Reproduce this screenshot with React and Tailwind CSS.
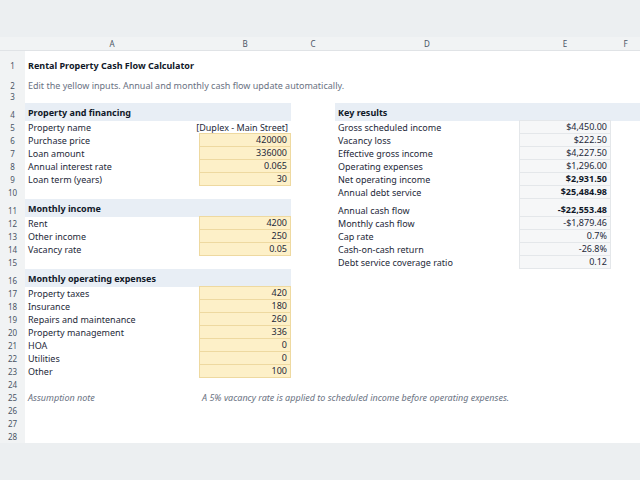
const cols = ['', 'A', 'B', 'C', 'D', 'E', 'F'];
const widths = ['w-[25px]', 'w-[174px]', 'w-[92px]', 'w-[44px]', 'w-[184px]', 'w-[92px]', 'w-[29px]'];

const heights = {
  1: 'h-[21px]', 2: 'h-[20px]', 3: 'h-[11px]', 4: 'h-[18px]', 11: 'h-[18px]', 16: 'h-[18px]',
};

const rows = {
  1: { a: 'Rental Property Cash Flow Calculator', aCls: 'font-bold text-gray-900' },
  2: { a: 'Edit the yellow inputs. Annual and monthly cash flow update automatically.', aCls: 'text-gray-500' },
  4: { a: 'Property and financing', head: 'left', d: 'Key results' },
  5: { a: 'Property name', b: '[Duplex - Main Street]', d: 'Gross scheduled income', e: '$4,450.00' },
  6: { a: 'Purchase price', b: '420000', input: true, d: 'Vacancy loss', e: '$222.50' },
  7: { a: 'Loan amount', b: '336000', input: true, d: 'Effective gross income', e: '$4,227.50' },
  8: { a: 'Annual interest rate', b: '0.065', input: true, d: 'Operating expenses', e: '$1,296.00' },
  9: { a: 'Loan term (years)', b: '30', input: true, d: 'Net operating income', e: '$2,931.50', eBold: true },
  10: { d: 'Annual debt service', e: '$25,484.98', eBold: true },
  11: { a: 'Monthly income', head: 'left', d: 'Annual cash flow', e: '-$22,553.48', eBold: true },
  12: { a: 'Rent', b: '4200', input: true, d: 'Monthly cash flow', e: '-$1,879.46' },
  13: { a: 'Other income', b: '250', input: true, d: 'Cap rate', e: '0.7%' },
  14: { a: 'Vacancy rate', b: '0.05', input: true, d: 'Cash-on-cash return', e: '-26.8%' },
  15: { d: 'Debt service coverage ratio', e: '0.12' },
  16: { a: 'Monthly operating expenses', head: 'left' },
  17: { a: 'Property taxes', b: '420', input: true },
  18: { a: 'Insurance', b: '180', input: true },
  19: { a: 'Repairs and maintenance', b: '260', input: true },
  20: { a: 'Property management', b: '336', input: true },
  21: { a: 'HOA', b: '0', input: true },
  22: { a: 'Utilities', b: '0', input: true },
  23: { a: 'Other', b: '100', input: true },
  25: { a: 'Assumption note', aCls: 'italic text-gray-500', b: 'A 5% vacancy rate is applied to scheduled income before operating expenses.', note: true },
};

function Row({ n }) {
  const r = rows[n] || {};
  const h = heights[n] || 'h-[13px]';
  const isHead = r.head === 'left';
  const headBg = 'bg-[#e8eef5] font-bold text-gray-900';
  return (
    <div className={`flex ${h} text-[9px] leading-none`}>
      <div className={`${widths[0]} shrink-0 bg-[#f1f3f4] text-gray-600 flex items-end pb-[2px] justify-center text-[8px]`}>{n}</div>
      <div className={`${widths[1]} shrink-0 flex px-[3px] whitespace-nowrap ${isHead ? headBg + ' items-center' : 'items-end pb-[2px]'} ${r.aCls || 'text-gray-800'}`}>
        {r.a}
      </div>
      {r.note ? (
        <div className="w-[276px] shrink-0 flex items-end pb-[2px] px-[3px] whitespace-nowrap italic text-gray-500">{r.b}</div>
      ) : (
        <div className={`${widths[2]} shrink-0 flex items-end justify-end pb-[2px] px-[3px] whitespace-nowrap text-gray-800 ${isHead ? headBg : ''} ${r.input ? 'bg-[#fdf0c8] border border-[#eed9a0] -mt-px' : ''}`}>
          {r.b}
        </div>
      )}
      {!r.note && <div className={`${widths[3]} shrink-0`} />}
      {!r.note && (
        <>
          <div className={`${widths[4]} shrink-0 flex px-[3px] whitespace-nowrap ${n === 4 ? headBg + ' items-center' : 'items-end pb-[2px] text-gray-800'}`}>{r.d}</div>
          <div className={`${widths[5]} shrink-0 flex items-end justify-end pb-[2px] px-[3px] whitespace-nowrap text-gray-800 ${n === 4 ? headBg : ''} ${r.e ? 'bg-[#f6f7f8] border border-[#e4e7ea] -mt-px' : ''} ${r.eBold ? 'font-bold text-gray-900' : ''}`}>{r.e}</div>
        </>
      )}
      <div className={`flex-1 ${n === 4 ? 'bg-[#e8eef5]' : ''}`} />
    </div>
  );
}

export default function App() {
  const nums = Array.from({ length: 28 }, (_, i) => i + 1);
  return (
    <div className="w-[640px] h-[480px] bg-[#eceff1] overflow-hidden font-['Liberation_Sans']">
      <div className="h-[37px]" />
      <div className="flex h-[14px] bg-[#f1f3f4] text-[8px] text-gray-600 border-b border-[#e0e3e6]">
        {cols.map((c, i) => (
          <div key={i} className={`${widths[i]} shrink-0 flex items-center justify-center`}>{c}</div>
        ))}
      </div>
      <div className="bg-white">
        {nums.map((n) => <Row key={n} n={n} />)}
      </div>
    </div>
  );
}
